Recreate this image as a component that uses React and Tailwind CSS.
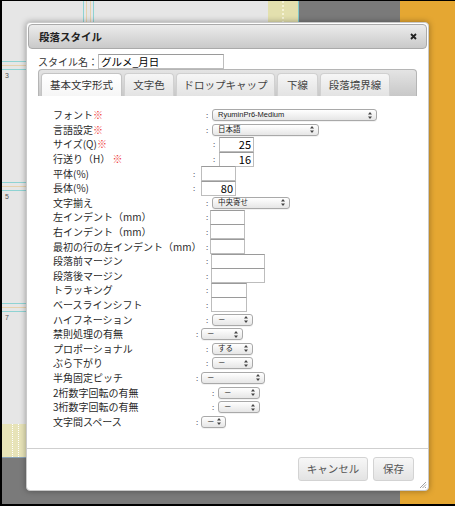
import React from 'react';

const rows = [
  { label: 'フォント', req: true, lw: 'w-[153px]', cw: 'w-[6px]', kind: 'select', sw: 'w-[165px]', text: 'RyuminPr6-Medium' },
  { label: '言語設定', req: true, lw: 'w-[153px]', cw: 'w-[6px]', kind: 'select', sw: 'w-[107px]', text: '日本語' },
  { label: 'サイズ(Q)', req: true, lw: 'w-[160px]', cw: 'w-[6px]', kind: 'input', sw: 'w-[35px]', text: '25' },
  { label: '行送り（H） ', req: true, lw: 'w-[160px]', cw: 'w-[6px]', kind: 'input', sw: 'w-[35px]', text: '16' },
  { label: '平体(%)', lw: 'w-[140px]', cw: 'w-[8px]', kind: 'input', sw: 'w-[35px]', text: '' },
  { label: '長体(%)', lw: 'w-[140px]', cw: 'w-[8px]', kind: 'input', sw: 'w-[35px]', text: '80' },
  { label: '文字揃え', lw: 'w-[153px]', cw: 'w-[6px]', kind: 'select', sw: 'w-[78px]', text: '中央寄せ' },
  { label: '左インデント（mm）', lw: 'w-[153px]', cw: 'w-[4px]', kind: 'input', sw: 'w-[35px]', text: '' },
  { label: '右インデント（mm）', lw: 'w-[153px]', cw: 'w-[4px]', kind: 'input', sw: 'w-[35px]', text: '' },
  { label: '最初の行の左インデント（mm）', lw: 'w-[153px]', cw: 'w-[4px]', kind: 'input', sw: 'w-[35px]', text: '' },
  { label: '段落前マージン', lw: 'w-[153px]', cw: 'w-[5px]', kind: 'input', sw: 'w-[54px]', text: '' },
  { label: '段落後マージン', lw: 'w-[153px]', cw: 'w-[5px]', kind: 'input', sw: 'w-[54px]', text: '' },
  { label: 'トラッキング', lw: 'w-[153px]', cw: 'w-[5px]', kind: 'input', sw: 'w-[36px]', text: '' },
  { label: 'ベースラインシフト', lw: 'w-[153px]', cw: 'w-[5px]', kind: 'input', sw: 'w-[36px]', text: '' },
  { label: 'ハイフネーション', lw: 'w-[153px]', cw: 'w-[6px]', kind: 'select', sw: 'w-[41px]', text: '－' },
  { label: '禁則処理の有無', lw: 'w-[143px]', cw: 'w-[5px]', kind: 'select', sw: 'w-[42px]', text: '－' },
  { label: 'プロポーショナル', lw: 'w-[153px]', cw: 'w-[6px]', kind: 'select', sw: 'w-[41px]', text: 'する' },
  { label: 'ぶら下がり', lw: 'w-[153px]', cw: 'w-[6px]', kind: 'select', sw: 'w-[41px]', text: '－' },
  { label: '半角固定ピッチ', lw: 'w-[143px]', cw: 'w-[5px]', kind: 'select', sw: 'w-[64px]', text: '－' },
  { label: '2桁数字回転の有無', lw: 'w-[159px]', cw: 'w-[6px]', kind: 'select', sw: 'w-[42px]', text: '－' },
  { label: '3桁数字回転の有無', lw: 'w-[159px]', cw: 'w-[6px]', kind: 'select', sw: 'w-[42px]', text: '－' },
  { label: '文字間スペース', lw: 'w-[143px]', cw: 'w-[5px]', kind: 'select', sw: 'w-[25px]', text: '－' },
];

const tabs = [
  { name: '基本文字形式', w: 'w-[81px]', active: true },
  { name: '文字色', w: 'w-[50px]' },
  { name: 'ドロップキャップ', w: 'w-[99px]' },
  { name: '下線', w: 'w-[41px]' },
  { name: '段落境界線', w: 'w-[70px]' },
];

const Arrows = () => (
  <svg width="4" height="7" viewBox="0 0 4 7" className="shrink-0">
    <path d="M2 0 L4 2.5 L0 2.5 Z M2 7 L4 4.5 L0 4.5 Z" fill="#444" />
  </svg>
);

const Select = ({ w, text }) => (
  <div
    className={`${w} h-[12px] shrink-0 flex items-center justify-between pl-[5px] pr-[4px] rounded-[3px] border border-[#a9a9a9] bg-gradient-to-b from-white to-[#e6e6e6] shadow-[0_1px_0_rgba(0,0,0,0.05)]`}
  >
    <span className="text-[7.5px] leading-[10px] whitespace-nowrap text-[#222] font-['Liberation_Sans','Noto_Sans_CJK_JP',sans-serif]">
      {text}
    </span>
    <Arrows />
  </div>
);

const Input = ({ w, text }) => (
  <div
    className={`${w} h-[15px] shrink-0 flex items-center justify-end pr-[2px] bg-white border border-[#bdbdbd] border-t-[#9a9a9a] text-[11px] leading-none text-black`}
  >
    {text}
  </div>
);

const LineGroup = ({ num }) => (
  <div className="flex flex-col">
    <div className="h-px bg-[#8fd3d3]" />
    <div className="h-[3px]" />
    <div className="h-px bg-[#e6d2ad]" />
    <div className="h-[3px]" />
    <div className="h-px bg-[#8fd3d3]" />
    <div className="pl-[3px] pt-[2px] text-[7px] leading-none text-[#555] font-['Liberation_Sans',sans-serif]">{num}</div>
  </div>
);

export default function App() {
  return (
    <div className="relative w-[455px] h-[506px] overflow-hidden bg-black font-['Noto_Sans_CJK_JP','Noto_Sans',sans-serif] text-[#333]">
      {/* background page canvas */}
      <div className="flex w-[453px] h-[503px] mt-px ml-[2px]">
        <div className="flex flex-col w-[398px]">
          <div className="flex h-[456px]">
            <div className="w-[266px] bg-[#e6e6e6] flex flex-col">
              <div className="h-[60px] flex pl-[81px]">
                <div className="w-[11px] h-[22px] border-x border-[#8fd3d3] flex justify-center">
                  <div className="w-[5px] border-x border-[#e6d2ad]" />
                </div>
              </div>
              <LineGroup num="3" />
              <div className="h-[103px]" />
              <LineGroup num="5" />
              <div className="h-[103px]" />
              <LineGroup num="7" />
              <div className="h-[103px]" />
              <div className="flex-1 bg-[#e7e3b8] flex pl-[10px] gap-[5px]">
                <div className="w-0 border-l border-dotted border-white" />
                <div className="w-0 border-l border-dotted border-white" />
              </div>
            </div>
            <div className="w-[30px] bg-[#e3e0ae] flex justify-center">
              <div className="w-0 h-[22px] border-l-2 border-dotted border-[#f4f2d6]" />
            </div>
            <div className="w-px bg-[#7fc9cc]" />
            <div className="flex-1 bg-[#7a7a7a]" />
          </div>
          <div className="h-px bg-[#8aa3b8]" />
          <div className="flex-1 bg-[#7a7a7a]" />
        </div>
        <div className="flex-1 bg-[#e5a732]" />
      </div>

      {/* dialog */}
      <div className="absolute left-[26px] top-[22px] w-[403px] h-[469px] bg-white border border-[#c9c9c9] rounded-[4px] shadow-[0_0_6px_rgba(0,0,0,0.35)] flex flex-col">
        <div className="mx-px mt-px h-[25px] rounded-[4px] border border-[#aaaaaa] bg-gradient-to-b from-[#ececec] to-[#c9c9c9] flex items-center justify-between pl-[10px] pr-[9px]">
          <span className="text-[10.5px] font-bold text-[#222]">段落スタイル</span>
          <svg width="7" height="7" viewBox="0 0 7 7">
            <path d="M1 1 L6 6 M6 1 L1 6" stroke="#222" strokeWidth="1.8" />
          </svg>
        </div>

        <div className="mt-[5px] ml-[11px] flex items-center h-[15px]">
          <span className="text-[10px] w-[60px] whitespace-nowrap">スタイル名：</span>
          <div className="w-[126px] h-[15px] border border-[#bdbdbd] border-t-[#9a9a9a] flex items-center pl-[2px] text-[10.5px] text-black whitespace-nowrap">
            グルメ_月日
          </div>
        </div>

        <div className="ml-[11px] mr-[11px] h-[27px] rounded-t-[4px] border border-b-0 border-[#b5b5b5] bg-gradient-to-b from-[#e4e4e4] to-[#c8c8c8] flex items-end gap-[2px] pl-[2px]">
          {tabs.map((t) => (
            <div
              key={t.name}
              className={`${t.w} h-[23px] flex items-center justify-center rounded-t-[4px] border border-b-0 text-[10.5px] whitespace-nowrap ${
                t.active
                  ? 'bg-gradient-to-b from-white to-[#f6f6f6] border-[#c4c4c4] text-[#333]'
                  : 'bg-gradient-to-b from-[#f6f6f6] to-[#e3e3e3] border-[#d0d0d0] text-[#444]'
              }`}
            >
              {t.name}
            </div>
          ))}
        </div>

        <div className="mt-[12px] pl-[26px] flex flex-col">
          {rows.map((r) => (
            <div key={r.label} className="h-[14.6px] flex items-center">
              <span className={`${r.lw} shrink-0 text-[10px] leading-none whitespace-nowrap text-[#2a2a2a]`}>
                {r.label}
                {r.req && <span className="text-[#ee3b3b]">※</span>}
              </span>
              <span className={`${r.cw} shrink-0 text-[8px] leading-none text-[#556]`}>:</span>
              {r.kind === 'select' ? <Select w={r.sw} text={r.text} /> : <Input w={r.sw} text={r.text} />}
            </div>
          ))}
        </div>

        <div className="mt-[19px] h-px bg-[#cfcfcf]" />
        <div className="mt-[8px] flex justify-end gap-[5px] pr-[14px]">
          <div className="w-[70px] h-[24px] rounded-[3px] border border-[#d3d3d3] bg-gradient-to-b from-[#f7f7f7] to-[#e3e3e3] flex items-center justify-center text-[10.5px] text-[#555]">
            キャンセル
          </div>
          <div className="w-[41px] h-[24px] rounded-[3px] border border-[#d3d3d3] bg-gradient-to-b from-[#f7f7f7] to-[#e3e3e3] flex items-center justify-center text-[10.5px] text-[#555]">
            保存
          </div>
        </div>
        <div className="mt-auto self-end mr-px mb-px">
          <svg width="8" height="8" viewBox="0 0 8 8">
            <path d="M7 1 L1 7 M7 3.5 L3.5 7 M7 6 L6 7" stroke="#888" strokeWidth="0.8" />
          </svg>
        </div>
      </div>
    </div>
  );
}
